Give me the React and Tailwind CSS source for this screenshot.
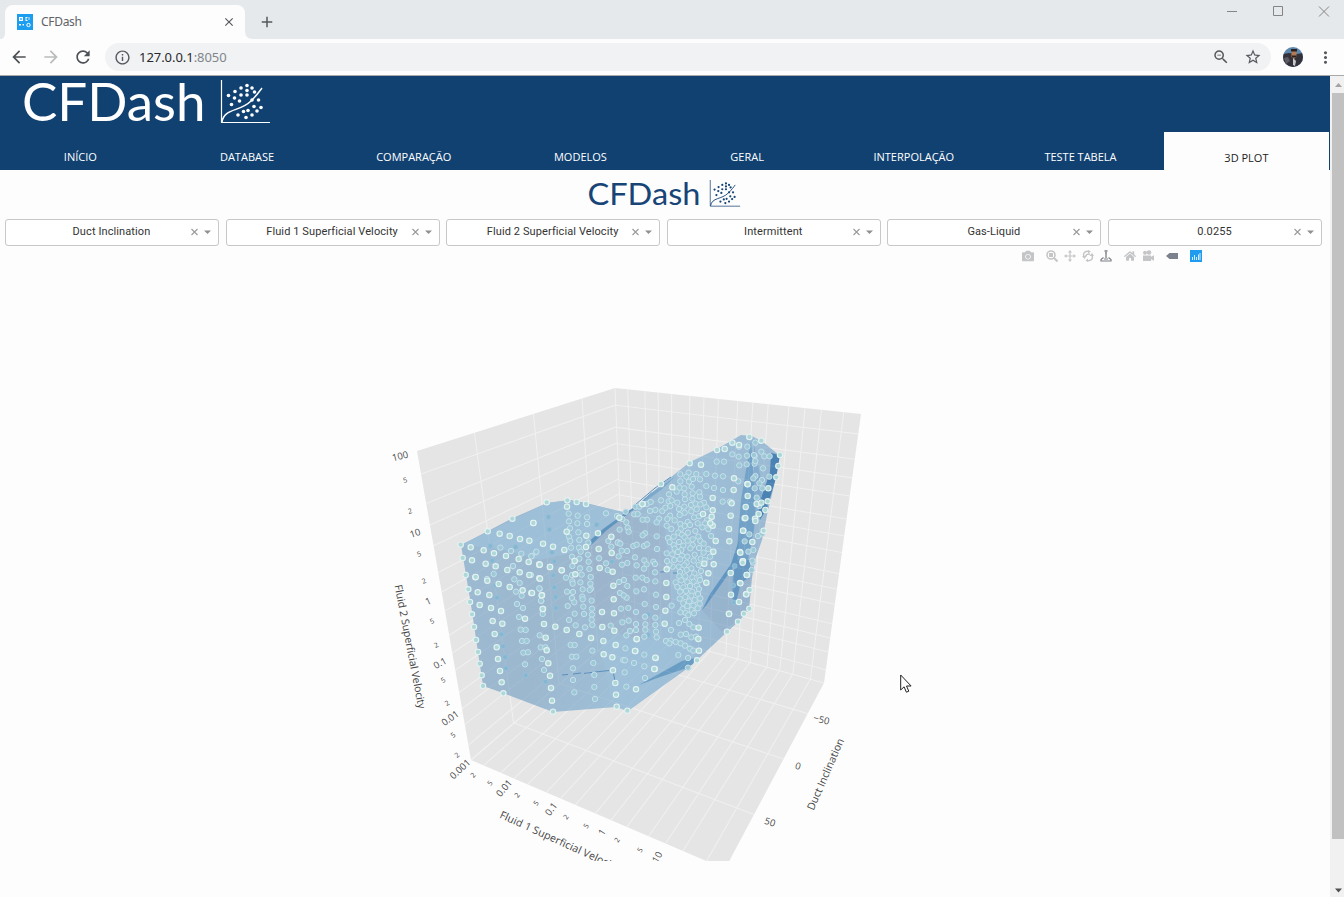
import React from 'react';
import { FaCamera, FaHome } from 'react-icons/fa';
import { MdArrowBack, MdArrowForward, MdRefresh, MdInfoOutline, MdZoomOut, MdStarBorder, MdMoreVert, MdClose, MdAdd } from 'react-icons/md';

/* ---------- 3D scene data ---------- */

// Each cloud: origin of the patch and "x,y" pairs in thirds of a pixel.
const CLOUDS = [
  {
    ox: 380, oy: 380,
    front: '242,494 323,454 397,416 272,502 311,511 359,461 389,468 420,477 448,482 460,429 342,520 378,528 416,537 446,546 248,534 276,541 317,551 347,559 382,570 419,577 448,585 257,585 286,592 478,553',
    mid: '361,503 393,513 424,521 455,528 468,517 399,559 403,598 321,597',
    back: '331,498 407,501 337,542 341,581',
  },
  {
    ox: 380, oy: 560,
    front: '287,51 322,62 356,72 389,81 428,91 454,99 486,106 265,88 293,97 328,105 270,126 299,135 333,144 363,153 276,163 338,183 367,191 435,176 489,147 282,201 344,222 288,240 350,262 294,276 354,297 299,311 360,333 305,346 365,367 309,378 370,400 478,14 510,21 545,31 478,55',
    mid: '399,18 419,69 408,95 425,107 411,132 417,171 429,144 422,209 437,210 426,243 440,243 430,278 444,277 435,313 479,87 484,123 341,42',
    back: '347,76 351,113 358,153 364,223 369,259 375,291 378,325 437,346 520,46 525,83 528,144 527,112',
  },
  {
    ox: 530, oy: 480,
    front: '50,67 112,61 140,66 168,72 10,129 111,80 110,155 39,191 29,254 60,261 30,296 6,339 35,346 38,387 42,432 47,473 50,511 55,550 60,587 63,624 66,662 69,695 69,200 103,210 134,243 136,283 95,271 76,440 110,450 148,462 169,167 168,201 204,160 206,207 209,264 244,170 245,219 248,275 250,317 251,358 252,400 253,452 216,396 217,441 220,483 221,523 257,495 247,532 249,571 256,609 258,644 260,680 292,692 183,474 320,478 316,513 318,628 338,72 268,113 377,534 374,567',
    mid: '116,101 143,107 171,112 117,124 142,130 171,132 120,145 145,157 117,170 148,180 121,183 147,203 175,188 123,203 152,215 174,224 126,230 148,236 176,245 127,258 150,265 178,267 108,293 126,285 155,284 182,291 127,304 128,311 151,307 181,311 111,335 129,336 158,328 183,326 126,354 157,350 158,358 179,330 113,378 133,367 160,380 185,362 134,401 186,386 117,420 137,436 162,402 186,404 185,419 165,442 187,435 122,495 134,495 126,530 139,530 129,565 129,600 133,637 187,512 190,549 193,585 193,621 195,657 28,325 33,362 38,402 29,466 32,502 46,502 36,537 42,570 228,100 261,108 265,187 269,149 293,143 287,95 277,117 289,127 296,155 263,188 271,191 275,212 291,213 276,254 292,249 266,229 267,306 282,300 292,318 270,339 290,353 281,346 273,386 295,384 277,427 296,422 289,466 300,453 286,505 280,540 285,541 289,620 284,577 207,235 235,183 244,200 233,270 228,250 242,437 3,285 19,215 4,229',
    back: '55,111 58,149 66,217 73,244 70,286 73,322 77,351 78,384 46,605 200,134 246,245',
  },
  {
    ox: 630, oy: 440,
    front: '307,8 284,27 261,30 179,70 213,74 93,132 127,142 37,192 312,115 311,150 305,190 302,227 297,267 298,304 302,399 303,464 297,521 352,132 353,168 344,235 340,272 330,336 338,364 351,405 330,429 327,486 348,463 342,521 324,545 291,575 201,661 207,632 205,597 206,563 76,653 73,687 109,471 106,512 104,551 109,429 110,388 248,174 248,211 219,222 250,335 251,373 223,371 235,400 229,428 257,303 245,230 248,257 241,250 375,236 380,192 20,597 15,633',
    mid: '151,103 176,98 199,102 229,102 169,110 151,124 177,125 189,117 210,118 149,143 163,145 185,140 117,163 140,155 164,163 188,160 208,157 93,181 116,184 142,188 165,178 187,176 210,170 222,188 125,181 60,213 76,210 97,213 106,203 121,198 147,207 163,200 183,195 197,191 211,193 87,236 120,227 149,225 164,218 184,214 200,208 229,202 51,239 80,247 112,237 110,257 134,241 151,252 173,246 192,232 207,229 231,241 124,267 153,266 164,258 180,255 203,250 225,250 235,268 145,278 156,284 174,278 196,273 217,262 114,294 131,290 164,292 173,302 188,298 205,290 243,288 119,306 147,306 160,317 188,315 211,303 221,311 131,315 134,326 154,330 181,325 207,324 235,327 127,343 144,336 156,347 172,350 194,344 221,338 240,350 110,340 133,360 150,358 170,368 191,362 212,356 128,380 146,380 163,376 184,385 206,375 224,360 150,396 170,390 193,400 213,393 148,409 166,409 187,412 208,412 137,427 154,421 172,426 191,425 210,420 142,441 160,442 180,438 201,437 150,455 168,453 187,455 207,447 149,476 166,471 184,467 204,462 160,490 177,484 194,480 211,475 158,507 172,498 190,497 209,491 151,517 167,519 185,510 203,505 175,525 192,520 147,549 165,540 178,552 190,562 152,584 168,582 184,592 198,590 108,603 122,602 137,606 152,610 165,617 180,626 190,632 145,645 174,654 174,683 13,223 23,222 38,239 45,280 38,286 80,289 10,318 20,314 42,318 51,313 81,327 15,352 43,361 70,365 20,376 50,373 75,372 42,386 75,397 17,413 37,413 50,420 76,424 19,454 42,448 78,464 44,492 78,501 18,516 45,530 76,533 18,552 46,553 76,555 18,570 46,569 78,575 43,590 80,592 12,669 43,644 43,679 45,714 118,374 111,363 125,497 123,570 118,610 260,65 282,65 307,43 326,50 351,47 327,20 352,20 350,73 328,76 255,107 279,109 325,124 229,138 252,144 279,150 278,185 300,185 374,48 374,71 376,108 374,145 16,200 28,200 50,192 62,186',
    back: '20,454 55,523 55,585 310,436 312,487 314,378',
  },
  {
    ox: 600, oy: 380,
    front: '448,171 417,195 484,182 535,258 540,225 505,325 484,368 476,402 466,423 496,390 529,292 503,364 491,452 443,313 437,381 436,414 429,452 457,486 421,518 429,544 441,585',
    mid: '466,188 484,215 493,229 509,229 462,225 489,265 466,243 486,300 508,290 460,295 478,310 487,325 470,353 478,378 474,468 487,461 460,510 459,548 448,463 434,484 445,515',
    back: '',
  },
  {
    ox: 600, oy: 560,
    front: '440,45 428,8 421,70 449,90 439,103 448,146 387,162',
    mid: '455,30 457,2',
    back: '',
  },
];

const OUTLINE =
  '461,545 488,531 513,518 547,503 570,500 586,503 627,513 661,485 690,462 717,449 741,435 752,436 763,442 779,455 778,468 773,490 767,515 762,540 755,560 752,578 749,610 738,622 727,632 697,660 688,668 628,711 616,707 553,712 503,693 483,686 471,605';

const toDots = (key) =>
  CLOUDS.flatMap((c) =>
    c[key].split(' ').filter(Boolean).map((p) => {
      const [x, y] = p.split(',').map(Number);
      return [c.ox + x / 3, c.oy + y / 3];
    })
  );

// Projective map of the unit square onto a quad a(0,0) b(1,0) c(1,1) d(0,1).
function project([a, b, c, d]) {
  const sx = a[0] - b[0] + c[0] - d[0];
  const sy = a[1] - b[1] + c[1] - d[1];
  const dx1 = b[0] - c[0], dx2 = d[0] - c[0];
  const dy1 = b[1] - c[1], dy2 = d[1] - c[1];
  const det = dx1 * dy2 - dx2 * dy1;
  const g = (sx * dy2 - dx2 * sy) / det;
  const h = (dx1 * sy - sx * dy1) / det;
  return (u, v) => {
    const w = g * u + h * v + 1;
    return [
      ((b[0] - a[0] + g * b[0]) * u + (d[0] - a[0] + h * d[0]) * v + a[0]) / w,
      ((b[1] - a[1] + g * b[1]) * u + (d[1] - a[1] + h * d[1]) * v + a[1]) / w,
    ];
  };
}

const LOG = [];
for (let dec = 0; dec < 5; dec++) [0, 0.301, 0.699].forEach((m) => LOG.push((dec + m) / 5));
const ANGLE = [40 / 180, 0.5, 140 / 180];

const LT = [417, 451], BT = [615, 388], RT = [861, 414];
const LB = [471, 760], BB = [625, 628], RB = [824, 683], FB = [725, 869];

const FACES = [
  { quad: [LB, BB, BT, LT], us: ANGLE, vs: LOG },
  { quad: [BB, RB, RT, BT], us: LOG, vs: LOG },
  { quad: [LB, FB, RB, BB], us: LOG, vs: ANGLE },
];

const Grid = ({ width, opacity }) => (
  <g stroke="#fff" strokeWidth={width} opacity={opacity}>
    {FACES.map((f, i) => {
      const p = project(f.quad);
      const seg = (a, b, k) => <line key={k} x1={a[0]} y1={a[1]} x2={b[0]} y2={b[1]} />;
      return (
        <g key={i}>
          {f.us.map((u) => seg(p(u, 0), p(u, 1), 'u' + u))}
          {f.vs.map((v) => seg(p(0, v), p(1, v), 'v' + v))}
        </g>
      );
    })}
  </g>
);

const TICKS = [
  ['100', 400, 456, -14], ['5', 405, 480, -14], ['2', 410, 511, -16], ['10', 415, 533, -18],
  ['5', 419, 554, -20], ['2', 424, 581, -22], ['1', 428, 601, -24], ['5', 432, 621, -26],
  ['2', 436, 645, -28], ['0.1', 440, 663, -29], ['5', 443, 680, -32], ['2', 447, 703, -34],
  ['0.01', 450, 718, -36], ['5', 453, 735, -38], ['2', 457, 755, -40], ['0.001', 460, 769, -43],
  ['2', 473, 775, -48], ['5', 490, 783, -49], ['0.01', 504, 788, -50], ['2', 517, 795, -51],
  ['5', 536, 803, -52], ['0.1', 551, 809, -53], ['2', 566, 817, -54], ['5', 586, 826, -55],
  ['1', 602, 832, -56], ['2', 617, 840, -57], ['5', 640, 850, -58], ['10', 657, 857, -59],
  ['−50', 821.5, 719.5, 14], ['0', 798, 766, 16], ['50', 770, 822, 18],
];

const Plot = () => (
  <svg className="block shrink-0" width="1330" height="595" viewBox="0 266 1330 595" fontFamily="'Open Sans', sans-serif">
    <defs>
      <linearGradient id="mesh" x1="0" y1="0" x2="1" y2="0.3">
        <stop offset="0" stopColor="#9bbad2" />
        <stop offset="0.45" stopColor="#9cb8cf" />
        <stop offset="0.7" stopColor="#9ebfd7" />
        <stop offset="1" stopColor="#9ab8d2" />
      </linearGradient>
    </defs>
    <polygon points="417,451 615,388 861,414 824,683 725,869 471,760" fill="#e5e5e5" />
    <Grid width="1.1" opacity="0.4" />

    <polygon points={OUTLINE} fill="url(#mesh)" />
    <polygon points="461,545 547,503 570,500 627,513 588,544 595,548 540,560 500,549" fill="#9dc0d8" opacity="0.8" />
    <polygon points="588,544 627,515 665,528 672,600 640,640 592,625" fill="#9ba9c1" opacity="0.3" />
    <polygon points="600,640 690,640 697,660 628,711 612,706" fill="#9fc1db" opacity="0.6" />
    <polygon points="702,610 735,565 742,540 750,580 749,610 722,632" fill="#93adc8" opacity="0.5" />
    <polygon points="587,543 603,529 621,516 640,503 652,492 648,499 628,514 607,530 590,546" fill="#5f94bf" />
    <polygon points="650,494 676,476 661,490 640,505" fill="#7ba9cc" />
    <polygon points="751,440 753,470 757,490 754,530 748,560 740,582 735,604 732,598 733,575 737,550 741,500 746,470" fill="#6b9dc4" opacity="0.85" />
    <polygon points="735,560 750,560 750,578 741,582 736,603 733,600" fill="#6597c1" />
    <polygon points="771,453 780,455 776,478 767,508 760,520 758,505 764,490 770,472" fill="#4a82b3" />
    <polygon points="754,445 760,475 763,488 758,515 754,500" fill="#84acce" />
    <polygon points="702,610 710,594 731,564 739,540 737,562 705,607" fill="#6296c2" />
    <polygon points="639,685 682,661 695,658 693,664 684,669 660,677" fill="#6a9dc4" />
    <g stroke="#5b90bd" strokeWidth="1" fill="none">
      <path d="M562 675l6-.6M573 674l8-1M584 673.400l8-1M595 672l14-1.500M613 671l2 10M660 572l9-.4M673 573h9M635 505l20-17 16-11" />
    </g>
    <Grid width="1" opacity="0.08" />

    <g fill="#83b7d2" stroke="#97c0d8" strokeWidth="0.9">
      {toDots('back').map(([x, y], i) => <circle key={i} cx={x} cy={y} r="2.400" />)}
    </g>
    <g fill="#9cc9d5" stroke="#c6dfec" strokeWidth="1">
      {toDots('mid').map(([x, y], i) => <circle key={i} cx={x} cy={y} r="2.700" />)}
    </g>
    <g fill="#aed8d8" stroke="#e4f2f2" strokeWidth="1.100">
      {toDots('front').map(([x, y], i) => <circle key={i} cx={x} cy={y} r="2.700" />)}
    </g>

    <g fill="#4a4a4a" textAnchor="middle">
      {TICKS.map(([t, x, y, r], i) => {
        const size = t === '2' || t === '5' ? 7 : 9.5;
        return (
          <text key={i} fontSize={size} transform={`translate(${x} ${y}) rotate(${r})`} y={size * 0.36}>{t}</text>
        );
      })}
    </g>
    <g fill="#444" fontSize="10.500">
      <text transform="translate(394.500 585.500) rotate(79)" textLength="126">Fluid 2 Superficial Velocity</text>
      <text transform="translate(499 817.500) rotate(24.500)" textLength="130">Fluid 1 Superficial Velocity</text>
      <text transform="translate(813.500 811) rotate(-66.500)" textLength="77">Duct Inclination</text>
    </g>
  </svg>
);

/* ---------- Logo ---------- */

const LOGO_DOTS = [
  [26, 5.500], [20, 8], [31, 8], [33.500, 12], [14, 11.500], [26, 10.500], [7.500, 15.500], [13.500, 18], [20, 15], [26, 15],
  [18.500, 21], [10.500, 24.500], [31, 20], [37.500, 20], [27, 30.500], [33, 26.500], [40, 27.500], [17, 35], [25, 37.500], [31, 35], [36, 31], [22.500, 31.500],
];

const Logo = ({ className = '', width }) => (
  <svg className={`overflow-visible ${className}`} width={width} height={(width * 46) / 250} viewBox="0 0 250 46" fill="currentColor">
    <text x="-1" y="41.300" fontFamily="Lato, sans-serif" fontSize="51.500" textLength="183.500" lengthAdjust="spacingAndGlyphs">CFDash</text>
    <g transform="translate(198 0)">
      <path d="M.5 0V42.500H49" fill="none" stroke="currentColor" strokeWidth="1.200" />
      <path d="M1 42C3 28 19 32 30 21C36 15 38 12 41 8" fill="none" stroke="currentColor" strokeWidth="1.500" />
      {LOGO_DOTS.map(([x, y], i) => <circle key={i} cx={x} cy={y} r="1.800" />)}
    </g>
  </svg>
);

/* ---------- Browser chrome ---------- */

const Browser = () => (
  <div className="flex h-[76px] shrink-0 flex-col border-b border-[#a9a9a9] bg-[#e6e9ec] font-['Noto_Sans',sans-serif]">
    <div className="flex h-[39px] shrink-0 items-start justify-between">
      <div className="flex items-start pt-[5px]">
        <svg width="5" height="34" viewBox="0 0 5 34"><path d="M5 34H0q5 0 5-6z" fill="#fdfdfd" /></svg>
        <div className="flex h-[34px] w-[240px] items-center rounded-t-lg bg-[#fdfdfd] pl-3 pr-[9px]">
          <svg width="16" height="16" viewBox="0 0 16 16" fill="#fff">
            <rect width="16" height="16" fill="#1b9df0" />
            <path d="M2 3h4v4H2zM8.500 3h2v1h-1v2h1v1h-2zM2 10h2v1.500H2zM5.500 10h1.500v1.500H5.500z" />
            <rect x="3.200" y="4.200" width="1.600" height="1.600" fill="#1b9df0" />
            <circle cx="11.500" cy="11" r="1.700" fill="none" stroke="#fff" />
            <path d="M11 3h2v3h-2z" opacity=".4" />
          </svg>
          <span className="ml-2 grow text-[12px] leading-4 tracking-[-0.3px] text-[#5f6368]">CFDash</span>
          <MdClose size={14} color="#55585c" />
        </div>
        <svg width="8" height="34" viewBox="0 0 8 34"><path d="M0 34h8q-8 0-8-8z" fill="#fdfdfd" /></svg>
        <MdAdd className="ml-[5px] mt-2" size={18} color="#55585c" />
      </div>
      <svg width="118" height="22" viewBox="0 0 118 22" fill="none" stroke="#858585">
        <path d="M1 11.500h10M47.500 6.500h9v9h-9zM93 6.500l10 10M103 6.500l-10 10" />
      </svg>
    </div>
    <div className="flex h-9 items-center bg-[#fdfdfd] px-[9px]">
      <MdArrowBack size={20} color="#4d5055" />
      <MdArrowForward className="ml-3" size={20} color="#b9bbbd" />
      <MdRefresh className="ml-3" size={20} color="#4d5055" />
      <div className="ml-3 flex h-7 grow items-center rounded-full bg-[#f1f2f4] px-[9px]">
        <MdInfoOutline size={17} color="#55585c" />
        <span className="ml-2 grow text-[13px] leading-4 tracking-[-0.05px] text-[#27292c]">
          127.0.0.1<span className="text-[#80868b]">:8050</span>
        </span>
        <MdZoomOut size={18} color="#55585c" />
        <MdStarBorder className="ml-[14px]" size={18} color="#55585c" />
      </div>
      <svg className="ml-3" width="20" height="20" viewBox="0 0 20 20">
        <clipPath id="avatar"><circle cx="10" cy="10" r="10" /></clipPath>
        <g clipPath="url(#avatar)">
          <rect width="20" height="20" fill="#5d88ae" />
          <path d="M0 7l6-1 8 1 6-1v14H0z" fill="#33323a" />
          <path d="M1 11l4-1 2 4-4 3z" fill="#5c5a62" />
          <path d="M8.500 3h5v7l-2.500 2-2.500-2z" fill="#b07a58" />
          <path d="M8 2h6v2.500H8zM9 8.500h4.500v2H9z" fill="#2a2020" />
          <path d="M10 11l3 3-1 5-2-1z" fill="#c9c9cb" />
        </g>
      </svg>
      <MdMoreVert className="ml-[13px]" size={19} color="#55585c" />
    </div>
  </div>
);

/* ---------- Page ---------- */

const TABS = ['INÍCIO', 'DATABASE', 'COMPARAÇÃO', 'MODELOS', 'GERAL', 'INTERPOLAÇÃO', 'TESTE TABELA', '3D PLOT'];
const FILTERS = ['Duct Inclination', 'Fluid 1 Superficial Velocity', 'Fluid 2 Superficial Velocity', 'Intermittent', 'Gas-Liquid', '0.0255'];

const Header = () => (
  <header className="flex h-[94px] shrink-0 flex-col bg-[#114171] text-white">
    <div className="h-14 pl-[23px] pt-1">
      <Logo width={250} />
    </div>
    <nav className="-ml-[3px] grid h-[38px] grid-cols-[repeat(7,166.700px)_1fr] font-['Open_Sans',sans-serif] text-[11px] leading-4">
      {TABS.map((t) =>
        t === '3D PLOT' ? (
          <div key={t} className="mr-px bg-[#fdfdfd] pt-[18px] text-center text-[#222]">{t}</div>
        ) : (
          <div key={t} className="pt-[17px] text-center font-medium">{t}</div>
        )
      )}
    </nav>
  </header>
);

const Select = ({ label }) => (
  <div className="flex h-[27px] min-w-0 items-center rounded-[3px] border border-[#c8c8c8] bg-white pr-1.5">
    <span className="grow whitespace-nowrap pb-px pl-[27px] text-center text-[11px] leading-4 tracking-[0.100px] text-[#333]">{label}</span>
    <svg className="-mt-0.5 shrink-0" width="22" height="10" viewBox="0 0 22 10">
      <path d="M1.500 2l6 6M7.500 2l-6 6" stroke="#9a9a9a" strokeWidth="1.100" />
      <path d="M14 3.500h7L17.500 7z" fill="#909090" />
    </svg>
  </div>
);

const ModeBar = () => (
  <div className="flex h-5 shrink-0 items-center pl-[1022px] text-[#c4c5c7]">
    <FaCamera size={12} />
    <svg className="ml-3" width="12" height="12" viewBox="0 0 12 12" fill="none" stroke="currentColor">
      <circle cx="5" cy="5" r="4" strokeWidth="1.600" />
      <path d="M8 8l3.500 3.500" strokeWidth="2" />
      <rect x="3.500" y="3.500" width="3" height="3" fill="currentColor" />
    </svg>
    <svg className="ml-1.5" width="12" height="12" viewBox="0 0 12 12" fill="currentColor">
      <path d="M6 0l2 2.500H6.600v2.900h2.900V4L12 6 9.500 8V6.600H6.600v2.900H8L6 12 4 9.500h1.400V6.600H2.500V8L0 6l2.500-2v1.400h2.900V2.500H4z" />
    </svg>
    <svg className="ml-1.5" width="12" height="12" viewBox="0 0 12 12" fill="none" stroke="currentColor" strokeWidth="1.400">
      <path d="M2 6.500C.5 3 3 1 6.500 1.200M10 5.500c1.500 3.500-1 5.500-4.500 5.300M3.500 6.500C4 4.500 6 3.800 8 4.200" />
      <path d="M6 0l3 1.500-3 2zM0 6h4.500L2.500 9zM6 12L3.500 10.500 6 8.500zM7.500 6H12l-2-3z" fill="currentColor" stroke="none" />
    </svg>
    <svg className="ml-1.5 text-[#7c7f84]" width="12" height="12" viewBox="0 0 12 12" fill="none" stroke="currentColor">
      <path d="M4.500 1h3M5 3h2M6 4v4" strokeWidth="1.300" />
      <path d="M3.500 7.500L1 9.500v1.500h10V9.500L8.500 7.500M4 9h4" strokeWidth="1.200" />
    </svg>
    <FaHome className="ml-3" size={12} />
    <svg className="ml-1.5" width="12" height="12" viewBox="0 0 12 12" fill="currentColor">
      <circle cx="3" cy="2.800" r="2" /><circle cx="7" cy="2.500" r="2.300" />
      <path d="M1 5.500h8v1.200l3-1.500v5.600l-3-1.500V11H1z" />
    </svg>
    <svg className="ml-3" width="12" height="12" viewBox="0 0 12 12"><path d="M3.500 3H12v6H3.500L0 6z" fill="#7b828d" /></svg>
    <svg className="ml-3" width="12" height="12" viewBox="0 0 12 12">
      <rect width="12" height="12" fill="#1f9cf0" />
      <path d="M2.500 10V7M4.500 10V5M6.500 10V7M8.500 10V4.500M10 10V3" stroke="#d4ecfc" strokeWidth="1" />
    </svg>
  </div>
);

const Scrollbar = () => (
  <div className="flex w-[14px] shrink-0 flex-col items-center bg-[#f1f1f1] pl-0.5">
    <svg className="shrink-0" width="12" height="17" viewBox="0 0 12 17"><path d="M3 11h7L6.500 7z" fill="#a3a3a3" /></svg>
    <div className="h-[746px] w-full bg-[#c1c1c1]" />
    <svg className="mt-auto" width="12" height="14" viewBox="0 0 12 14"><path d="M3 5.500h7L6.500 9.500z" fill="#505050" /></svg>
  </div>
);

export default function App() {
  return (
    <div className="relative flex h-[897px] w-[1344px] flex-col overflow-hidden bg-[#fdfdfd]">
      <Browser />
      <div className="flex min-h-0 grow">
        <main className="flex w-[1330px] flex-col overflow-hidden">
          <Header />
          <div className="flex h-[49px] shrink-0 justify-center pt-2.5">
            <Logo className="text-[#184577]" width={154} />
          </div>
          <div className="grid shrink-0 grid-cols-6 gap-x-[6.700px] pl-[5px] pr-2 font-['Roboto',sans-serif]">
            {FILTERS.map((f) => <Select key={f} label={f} />)}
          </div>
          <ModeBar />
          <Plot />
        </main>
        <Scrollbar />
      </div>
      <svg className="absolute left-[900px] top-[674px]" width="13" height="20" viewBox="0 0 13 20">
        <path d="M.7 1v15l3.400-3.200 2.300 5.400 2.400-1-2.300-5.200h4.600z" fill="#fff" stroke="#222" />
      </svg>
    </div>
  );
}
